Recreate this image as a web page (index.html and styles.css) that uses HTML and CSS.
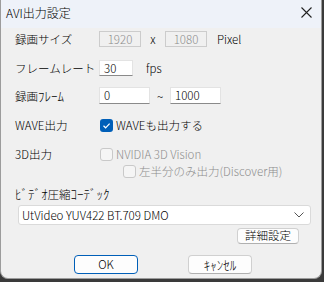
FILE: index.html
```
<!DOCTYPE html>
<html>
<head>
  <meta charset="utf-8">
  <title>AVI出力設定</title>
  <link rel="stylesheet" href="styles.css">
</head>
<body>
  <div class="window">
    <div class="titlebar">
      <span class="title">AVI出力設定</span>
      <svg class="close" width="11" height="11" viewBox="0 0 11 11">
        <path d="M0.5 0.5 L10.5 10.5 M10.5 0.5 L0.5 10.5" stroke="#222" stroke-width="1.1" fill="none"/>
      </svg>
    </div>

    <div class="content">
      <div class="row row-size">
        <span class="label">録画サイズ</span>
        <span class="field disabled w42">1920</span>
        <span class="sep">x</span>
        <span class="field disabled w42">1080</span>
        <span class="unit">Pixel</span>
      </div>

      <div class="row row-fps">
        <span class="label">フレームレート</span>
        <span class="field w34">30</span>
        <span class="unit fps">fps</span>
      </div>

      <div class="row row-frame">
        <span class="label">録画<span class="hw">ﾌﾚｰﾑ</span></span>
        <span class="field w51">0</span>
        <span class="sep tilde">~</span>
        <span class="field w51">1000</span>
      </div>

      <div class="row row-wave">
        <span class="label">WAVE出力</span>
        <span class="check checked">
          <svg width="13" height="13" viewBox="0 0 13 13"><path d="M3.5 6.8 L5.6 8.8 L9.6 4.6" stroke="#fff" stroke-width="1.2" fill="none"/></svg>
        </span>
        <span class="check-text">WAVEも出力する</span>
      </div>

      <div class="row row-3d">
        <span class="label">3D出力</span>
        <span class="check off"></span>
        <span class="check-text gray">NVIDIA 3D Vision</span>
      </div>

      <div class="row row-half">
        <span class="check off"></span>
        <span class="check-text gray">左半分のみ出力(Discover用)</span>
      </div>

      <div class="row row-codec-label">
        <span class="label wide"><span class="hw">ﾋﾞﾃﾞｵ</span>圧縮<span class="hw">ｺｰﾃﾞｯｸ</span></span>
      </div>

      <div class="combo">
        <span>UtVideo YUV422 BT.709 DMO</span>
        <svg width="10" height="6" viewBox="0 0 10 6"><path d="M0.5 0.5 L5 5 L9.5 0.5" stroke="#555" stroke-width="1" fill="none"/></svg>
      </div>

      <div class="row row-detail">
        <button class="btn detail">詳細設定</button>
      </div>

      <div class="row row-buttons">
        <button class="btn ok">OK</button>
        <button class="btn"><span class="hw">ｷｬﾝｾﾙ</span></button>
      </div>
    </div>
  </div>
</body>
</html>
```

FILE: styles.css
```
body {
  margin: 0;
  width: 324px;
  height: 282px;
  background: #3a3a3a;
  font-family: "Noto Sans CJK JP", "Noto Sans", sans-serif;
  font-size: 11.5px;
  font-weight: 300;
  color: #000;
  overflow: hidden;
}

.window {
  width: 322px;
  height: 279px;
  background: #f0f0f0;
  border: 1px solid #9c9c9c;
  border-top: none;
  border-radius: 0 0 8px 8px;
  box-sizing: border-box;
  overflow: hidden;
}

.titlebar {
  height: 28px;
  background: #eef2f9;
  display: flex;
  align-items: center;
  justify-content: space-between;
  padding: 0 9px 0 5px;
}

.title {
  font-size: 12px;
  margin-top: -3px;
}

.close {
  margin-top: -3px;
}

.content {
  padding: 3px 0 0 14px;
}

.row {
  display: flex;
  align-items: center;
}

.label {
  width: 84px;
  flex: none;
}

.label.wide {
  width: auto;
}

/* half-width kana render small in Noto, bump them up */
.hw {
  font-size: 13px;
  line-height: 1;
}

.field {
  box-sizing: border-box;
  height: 16px;
  background: #fff;
  border: 1px solid #e3e3e3;
  border-bottom-color: #8a8a8a;
  padding-left: 4px;
  line-height: 14px;
}

.field.disabled {
  background: #f0f0f0;
  border-color: #cccccc;
  color: #8d8d8d;
  text-align: center;
  padding-left: 0;
}

.w42 { width: 42px; }
.w34 { width: 34px; }
.w51 { width: 51px; }

.sep {
  width: 24px;
  text-align: center;
}

.tilde {
  width: 20px;
}

.unit {
  margin-left: 10px;
}

.fps {
  margin-left: 13px;
}

.row-size { height: 16px; }
.row-fps { height: 16px; margin-top: 13px; }
.row-frame { height: 17px; margin-top: 11px; }
.row-frame .field { height: 17px; }
.row-wave { height: 14px; margin-top: 14px; }
.row-3d { height: 14px; margin-top: 15px; }
.row-half { height: 14px; margin-top: 3px; padding-left: 107px; }
.row-codec-label { height: 14px; margin-top: 9px; }

.check {
  box-sizing: border-box;
  width: 13px;
  height: 13px;
  border-radius: 3px;
  flex: none;
  margin-left: 1px;
  display: flex;
}

.check.checked {
  background: #005fb8;
}

.check.off {
  background: #f5f5f5;
  border: 1px solid #c9c9c9;
}

.check-text {
  margin-left: 3px;
}

.check-text.gray {
  color: #8d8d8d;
}

.combo {
  box-sizing: border-box;
  margin: 4px 0 0 3px;
  width: 293px;
  height: 20px;
  background: #fff;
  border: 1px solid #dadada;
  border-radius: 3px;
  display: flex;
  align-items: center;
  justify-content: space-between;
  padding: 0 6px 0 3px;
}

.btn {
  box-sizing: border-box;
  font-family: "Noto Sans CJK JP", "Noto Sans", sans-serif;
  font-size: 11.5px;
  font-weight: 300;
  background: #fdfdfd;
  border: 1px solid #d0d0d0;
  border-bottom-color: #b0b0b0;
  border-radius: 4px;
  padding: 0;
  color: #000;
  line-height: 1;
}

.row-detail {
  height: 16px;
  margin-top: 3px;
  justify-content: flex-end;
  padding-right: 22px;
}

.detail {
  width: 62px;
  height: 16px;
}

.row-buttons {
  height: 19px;
  margin-top: 11px;
  padding-left: 59px;
  gap: 50px;
}

.row-buttons .btn {
  width: 64px;
  height: 19px;
}

.btn.ok {
  border: 1px solid #005fb8;
}
```
